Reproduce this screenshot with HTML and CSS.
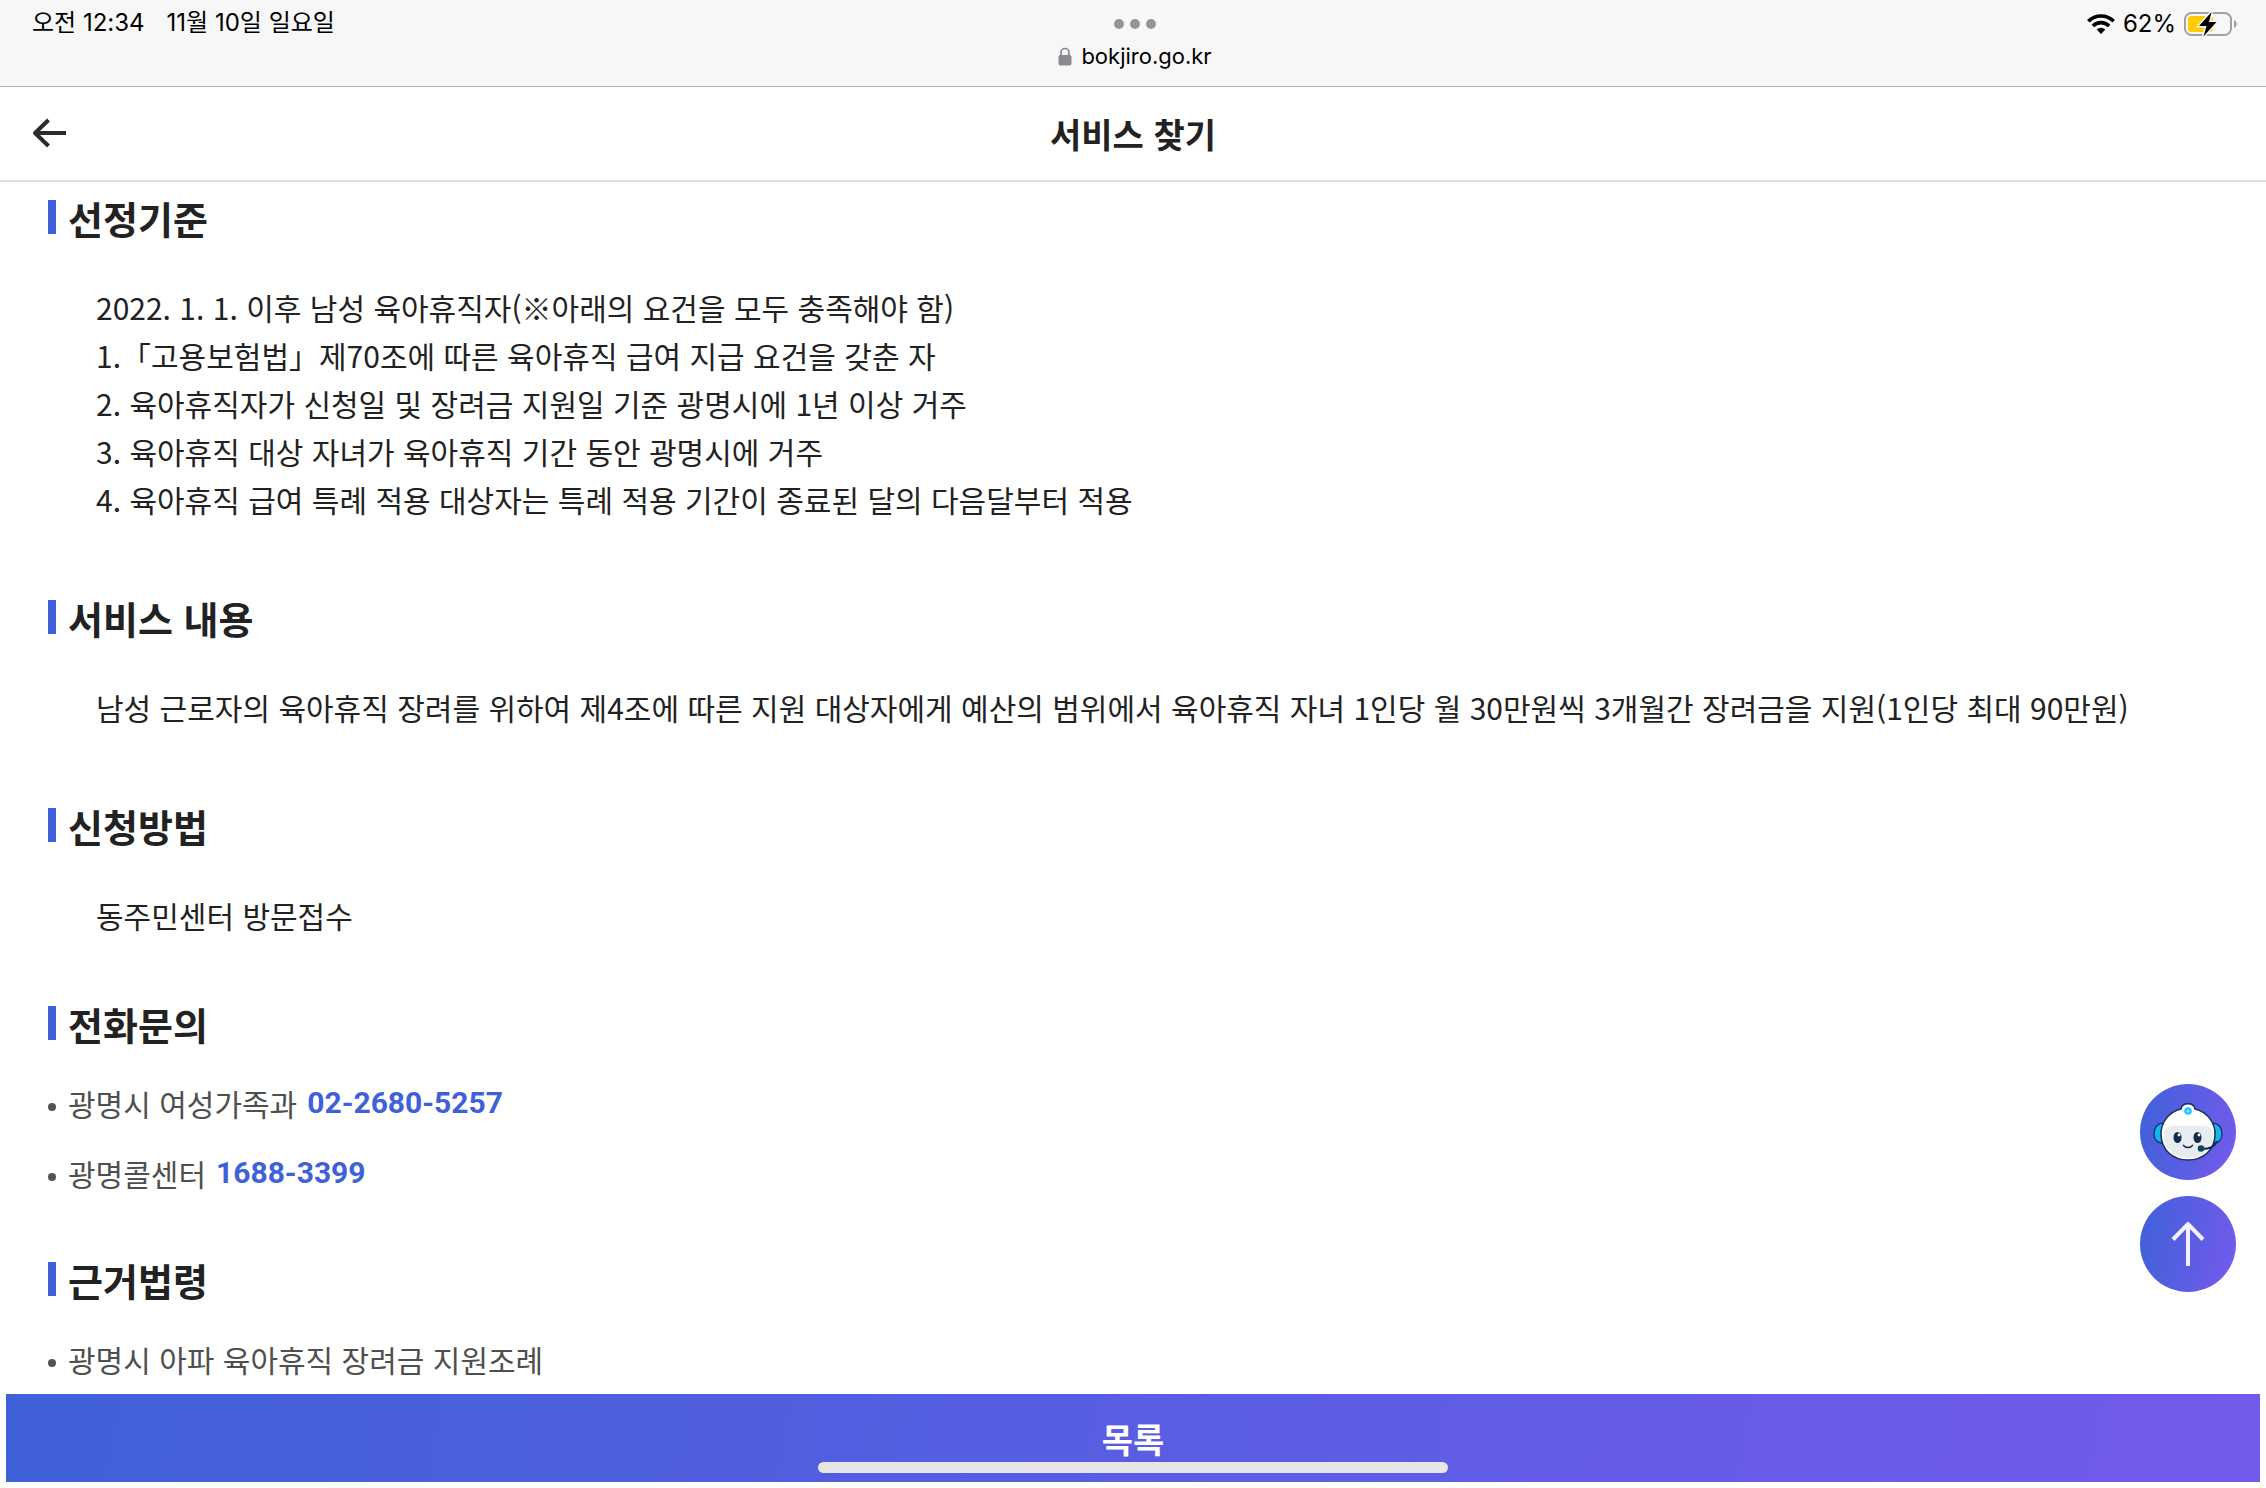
FILE: index.html
```html
<!DOCTYPE html>
<html lang="ko">
<head>
<meta charset="utf-8">
<meta name="viewport" content="width=device-width, initial-scale=1">
<title>서비스 찾기</title>
<link rel="stylesheet" href="styles.css">
</head>
<body>
<div class="status-bar">
  <div class="status-left"><span>오전 12:34</span><span>11월 10일 일요일</span></div>
  <div class="status-center">
    <div class="dots"><i class="dot"></i><i class="dot"></i><i class="dot"></i></div>
    <div class="address">
      <svg class="lock" viewBox="0 0 14 19" width="14" height="19" aria-hidden="true"><path d="M3 9V5.5a4 4 0 0 1 8 0V9" fill="none" stroke="#8a898e" stroke-width="1.7"/><rect x="0.5" y="8" width="13" height="10.5" rx="2" fill="#8a898e"/></svg>
      <span>bokjiro.go.kr</span>
    </div>
  </div>
  <div class="status-right">
    <svg viewBox="0 0 28 20" width="28" height="20" aria-hidden="true"><g fill="none" stroke="#000" stroke-width="3.6"><path d="M1.3 7.2a18 18 0 0 1 25.4 0"/><path d="M5.9 12a11.5 11.5 0 0 1 16.2 0"/></g><path d="M14 20l-4.3-4.4a6 6 0 0 1 8.6 0z" fill="#000"/></svg>
    <span>62%</span>
    <svg class="battery" viewBox="0 0 54 26" width="54" height="26" aria-hidden="true"><rect x="1" y="2" width="46" height="22" rx="6.5" fill="none" stroke="#a0a0a0" stroke-width="2"/><path d="M50 9.2c3.6 1.2 3.6 6.4 0 7.6z" fill="#a0a0a0"/><rect x="4" y="5" width="25" height="16" rx="3.5" fill="#ffcc00"/><path d="M27.5 1L15 15h7.5L19.500 25.5 32.5 11H25z" fill="#000" stroke="#f7f7f7" stroke-width="3" paint-order="stroke"/></svg>
  </div>
</div>
<header class="app-header">
  <button class="back" type="button" aria-label="뒤로"><svg viewBox="0 0 36 30" width="36" height="30" aria-hidden="true"><path d="M34 15H3M16.5 2L3 15l13.5 13" fill="none" stroke="#2b2b2b" stroke-width="4" stroke-linejoin="round"/></svg></button>
  <h1 class="title">서비스 찾기</h1>
</header>
<main class="content">
  <section class="block">
    <h2 class="heading">선정기준</h2>
    <p class="text">2022. 1. 1. 이후 남성 육아휴직자(※아래의 요건을 모두 충족해야 함)<br>1.「고용보험법」제70조에 따른 육아휴직 급여 지급 요건을 갖춘 자<br>2. 육아휴직자가 신청일 및 장려금 지원일 기준 광명시에 1년 이상 거주<br>3. 육아휴직 대상 자녀가 육아휴직 기간 동안 광명시에 거주<br>4. 육아휴직 급여 특례 적용 대상자는 특례 적용 기간이 종료된 달의 다음달부터 적용</p>
  </section>
  <section class="block">
    <h2 class="heading">서비스 내용</h2>
    <p class="text">남성 근로자의 육아휴직 장려를 위하여 제4조에 따른 지원 대상자에게 예산의 범위에서 육아휴직 자녀 1인당 월 30만원씩 3개월간 장려금을 지원(1인당 최대 90만원)</p>
  </section>
  <section class="block">
    <h2 class="heading">신청방법</h2>
    <p class="text">동주민센터 방문접수</p>
  </section>
  <section class="block">
    <h2 class="heading">전화문의</h2>
    <ul class="list">
      <li class="item">광명시 여성가족과<a class="phone" href="tel:02-2680-5257">02-2680-5257</a></li>
      <li class="item">광명콜센터<a class="phone" href="tel:1688-3399">1688-3399</a></li>
    </ul>
  </section>
  <section class="block">
    <h2 class="heading">근거법령</h2>
    <ul class="list">
      <li class="item">광명시 아파 육아휴직 장려금 지원조례</li>
    </ul>
  </section>
</main>
<div class="floating">
  <button class="round" type="button" aria-label="챗봇"><svg viewBox="0 0 70 58" width="70" height="58" aria-hidden="true">
    <path d="M10 20C3 21 1 26 1 31s3 9 9 9z" fill="#17b4ee" stroke="#173a68" stroke-width="1.5"/><path d="M60 20c7 1 9 6 9 11s-3 9-9 9z" fill="#17b4ee" stroke="#173a68" stroke-width="1.5"/>
    <path d="M28 6c1-7 13-7 14 0 12 3 20 13 20 25 0 16-12 26-27 26S8 47 8 31C8 19 16 9 28 6z" fill="#fff" stroke="#183055" stroke-width="1.5"/>
    <path d="M20 23h30c8 0 10 5 10 10-1 14-12 22-25 22S12 47 11 34c0-6 2-11 9-11z" fill="#e9ecee"/>
    <circle cx="35" cy="8" r="3.8" fill="#20c8fa"/><circle cx="35" cy="8" r="1.5" fill="#85e4ff"/>
    <ellipse cx="24.5" cy="34.5" rx="4" ry="5.5" fill="#142b50"/><ellipse cx="44.5" cy="34.5" rx="4" ry="5.5" fill="#142b50"/><circle cx="26" cy="32" r="1.4" fill="#fff"/><circle cx="46" cy="32" r="1.4" fill="#fff"/>
    <path d="M30 42q2 2.500 5 2.5t5-2.5" fill="none" stroke="#142b50" stroke-width="1.5"/>
    <path d="M64 38c-2 6-7 8-15 8" fill="none" stroke="#142b50" stroke-width="2"/><circle cx="48" cy="45.5" r="3.3" fill="#15435c"/>
  </svg></button>
  <button class="round" type="button" aria-label="맨 위로"><svg viewBox="0 0 34 44" width="34" height="44" aria-hidden="true"><path d="M17 44V2M2 17.5L17 2l15 15.5" fill="none" stroke="#f3f1fe" stroke-width="4"/></svg></button>
</div>
<footer class="footer">
  <button class="list-button" type="button">목록</button>
  <div class="home-indicator"></div>
</footer>
</body>
</html>
```
FILE: styles.css
```css
* {
  box-sizing: border-box;
}

body {
  margin: 0;
  min-height: 100vh;
  display: flex;
  flex-direction: column;
  background: #fff;
  color: #222;
  font-family: "Noto Sans CJK KR", sans-serif;
}

h1, h2, p, ul {
  margin: 0;
  padding: 0;
}

button {
  border: 0;
  padding: 0;
  font-family: inherit;
  cursor: pointer;
}

svg {
  display: block;
}

.status-bar {
  display: grid;
  grid-template-columns: 1fr auto 1fr;
  align-items: start;
  height: 87px;
  padding: 0 28px 0 32px;
  border-bottom: 1px solid #b2b2b2;
  background: #f7f7f7;
  color: #000;
  font-family: Inter, "Noto Sans CJK KR", sans-serif;
  font-size: 24px;
  line-height: 46px;
}

.status-left {
  display: flex;
  gap: 22px;
}

.status-center {
  display: flex;
  flex-direction: column;
  align-items: center;
  gap: 14px;
  padding-top: 19px;
}

.dots {
  display: flex;
  gap: 6px;
}

.dot {
  width: 10px;
  height: 10px;
  border-radius: 50%;
  background: #969696;
}

.address {
  display: flex;
  align-items: center;
  gap: 9px;
  font-size: 22px;
  line-height: 26px;
}

.status-right {
  display: flex;
  justify-content: flex-end;
  align-items: center;
  gap: 8px;
  height: 48px;
}

.app-header {
  display: grid;
  grid-template-columns: 1fr auto 1fr;
  align-items: center;
  height: 95px;
  padding: 0 32px;
  border-bottom: 2px solid #dedede;
}

.back {
  justify-self: start;
  padding-bottom: 2px;
  background: none;
}

.title {
  font-size: 34px;
  font-weight: 700;
  line-height: 48px;
}

.content {
  flex: 1;
  display: flex;
  flex-direction: column;
  gap: 55px;
  padding: 8px 48px 11px;
}

.heading {
  display: flex;
  gap: 12px;
  font-size: 38px;
  font-weight: 700;
  line-height: 56px;
}

.heading::before {
  content: "";
  width: 8px;
  height: 34px;
  margin-top: 10px;
  background: #3f61d8;
}

.text {
  padding: 37px 48px 12px;
  font-size: 30px;
  line-height: 48px;
}

.block:nth-child(3) .text {
  padding-bottom: 2px;
}

.list {
  display: flex;
  flex-direction: column;
  gap: 22px;
  padding-top: 27px;
  list-style: none;
}

.item {
  display: flex;
  align-items: center;
  gap: 10px;
  color: #4f4f4f;
  font-size: 30px;
  line-height: 48px;
}

.item::before {
  content: "";
  width: 8px;
  height: 8px;
  margin: 8px 2px 0 0;
  border-radius: 50%;
  background: #555;
}

.phone {
  color: #3f61d8;
  font-family: Roboto, sans-serif;
  font-weight: 700;
  text-decoration: none;
}

.floating {
  position: fixed;
  right: 30px;
  bottom: 196px;
  display: grid;
  gap: 16px;
}

.round {
  display: grid;
  place-items: center;
  width: 96px;
  height: 96px;
  border-radius: 50%;
  background: linear-gradient(100deg, #3f61d8, #745aed);
}

.footer {
  position: sticky;
  bottom: 0;
  padding: 0 6px 6px;
  background: #fff;
}

.list-button {
  display: block;
  width: 100%;
  height: 88px;
  background: linear-gradient(100deg, #3f61d8, #735aec);
  color: #fff;
  font-size: 34px;
  font-weight: 700;
}

.home-indicator {
  position: absolute;
  bottom: 15px;
  left: 50%;
  width: 630px;
  height: 11px;
  margin-left: -315px;
  border-radius: 6px;
  background: #e6e6e6;
}
```
